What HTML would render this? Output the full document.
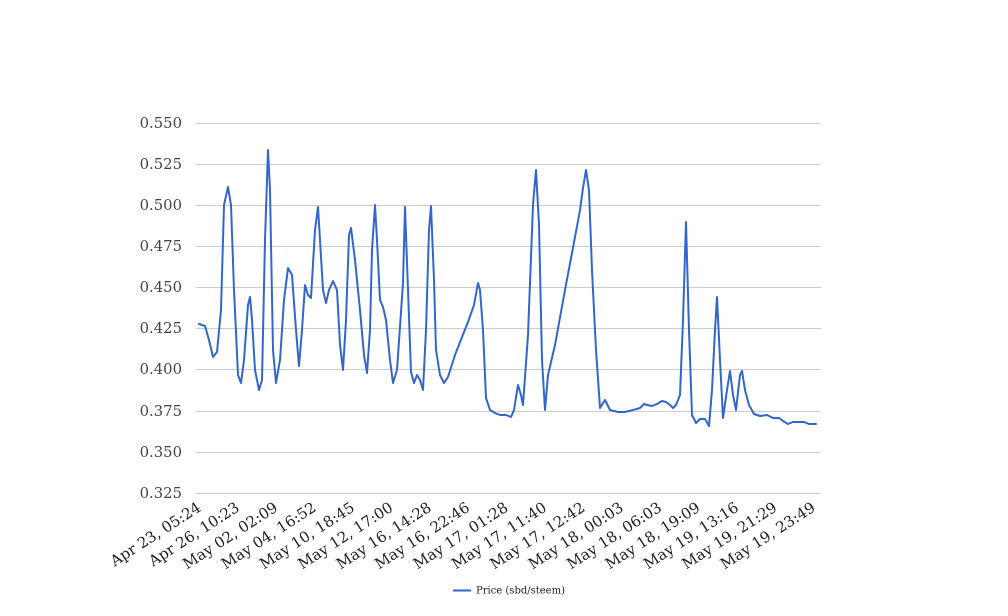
<!DOCTYPE html>
<html><head><meta charset="utf-8"><style>
html,body{margin:0;padding:0;background:#fff;}
svg{display:block;font-family:"DejaVu Serif",serif;}
</style></head><body>
<svg width="1008" height="616" viewBox="0 0 1008 616" xmlns="http://www.w3.org/2000/svg">
<g stroke="#cccccc" stroke-width="1">
<line x1="196" x2="821" y1="123.5" y2="123.5"/>
<line x1="196" x2="821" y1="164.5" y2="164.5"/>
<line x1="196" x2="821" y1="205.5" y2="205.5"/>
<line x1="196" x2="821" y1="246.5" y2="246.5"/>
<line x1="196" x2="821" y1="287.5" y2="287.5"/>
<line x1="196" x2="821" y1="328.5" y2="328.5"/>
<line x1="196" x2="821" y1="369.5" y2="369.5"/>
<line x1="196" x2="821" y1="411.5" y2="411.5"/>
<line x1="196" x2="821" y1="452.5" y2="452.5"/>
<line x1="196" x2="821" y1="493.5" y2="493.5"/>
</g>
<g fill="#444" font-size="14.8" text-anchor="end">
<text x="182" y="128">0.550</text>
<text x="182" y="169">0.525</text>
<text x="182" y="210">0.500</text>
<text x="182" y="251">0.475</text>
<text x="182" y="292">0.450</text>
<text x="182" y="333">0.425</text>
<text x="182" y="374">0.400</text>
<text x="182" y="416">0.375</text>
<text x="182" y="457">0.350</text>
<text x="182" y="498">0.325</text>
</g>
<g fill="#222" font-size="15" text-anchor="end">
<text transform="translate(202,510) rotate(-33)">Apr 23, 05:24</text>
<text transform="translate(240.4,510) rotate(-33)">Apr 26, 10:23</text>
<text transform="translate(278.8,510) rotate(-33)">May 02, 02:09</text>
<text transform="translate(317.2,510) rotate(-33)">May 04, 16:52</text>
<text transform="translate(355.6,510) rotate(-33)">May 10, 18:45</text>
<text transform="translate(394,510) rotate(-33)">May 12, 17:00</text>
<text transform="translate(432.4,510) rotate(-33)">May 16, 14:28</text>
<text transform="translate(470.8,510) rotate(-33)">May 16, 22:46</text>
<text transform="translate(509.2,510) rotate(-33)">May 17, 01:28</text>
<text transform="translate(547.6,510) rotate(-33)">May 17, 11:40</text>
<text transform="translate(586,510) rotate(-33)">May 17, 12:42</text>
<text transform="translate(624.4,510) rotate(-33)">May 18, 00:03</text>
<text transform="translate(662.8,510) rotate(-33)">May 18, 06:03</text>
<text transform="translate(701.2,510) rotate(-33)">May 18, 19:09</text>
<text transform="translate(739.6,510) rotate(-33)">May 19, 13:16</text>
<text transform="translate(778,510) rotate(-33)">May 19, 21:29</text>
<text transform="translate(816.4,510) rotate(-33)">May 19, 23:49</text>
</g>
<polyline fill="none" stroke="#3366cc" stroke-width="2" stroke-linejoin="round" stroke-linecap="round" points="199,324 205,326 209,340 213,357 217,352 221,310 224,205 228,187 231,205 234,290 238,375 241,383 244,360 248,305 250,297 252,320 255,370 259,390 262,380 265,240 268,150 270,190 273,350 276,383 280,360 284,300 288,268 292,275 296,330 299,366 302,330 305,285 308,295 311,298 315,230 318,207 320,240 323,290 326,303 329,290 333,281 337,290 340,345 343,370 346,320 349,235 351,228 355,260 360,310 364,355 367,373 370,330 372,250 375,205 377,240 380,300 383,307 386,320 390,360 393,383 397,370 403,283 405,207 408,290 411,372 414,383 417,375 420,380 423,390 426,330 429,230 431,206 434,280 436,350 440,375 444,383 448,377 455,355 462,337 468,322 474,305 478,283 480,290 483,330 486,398 490,410 495,413 500,415 506,415 511,417 514,410 518,385 521,395 523,405 528,335 533,205 536,170 539,225 542,360 545,410 548,375 555,345 565,290 575,237 580,210 583,188 586,170 589,190 592,270 596,350 600,408 605,400 610,410 618,412 625,412 633,410 640,408 644,404 647,405 652,406 657,404 662,401 666,402 670,405 673,408 676,405 680,395 683,320 686,222 689,330 692,415 696,423 700,419 705,419 709,426 712,390 715,330 717,297 720,360 723,418 727,390 730,371 733,395 736,410 740,375 742,371 745,390 749,405 754,414 760,416 767,415 773,418 779,418 783,421 788,424 793,422 799,422 804,422 809,424 816,424"/>
<line x1="453" x2="471" y1="590.5" y2="590.5" stroke="#3366cc" stroke-width="2"/>
<text x="476" y="593.5" font-size="10" fill="#222">Price (sbd/steem)</text>
</svg>
</body></html>
